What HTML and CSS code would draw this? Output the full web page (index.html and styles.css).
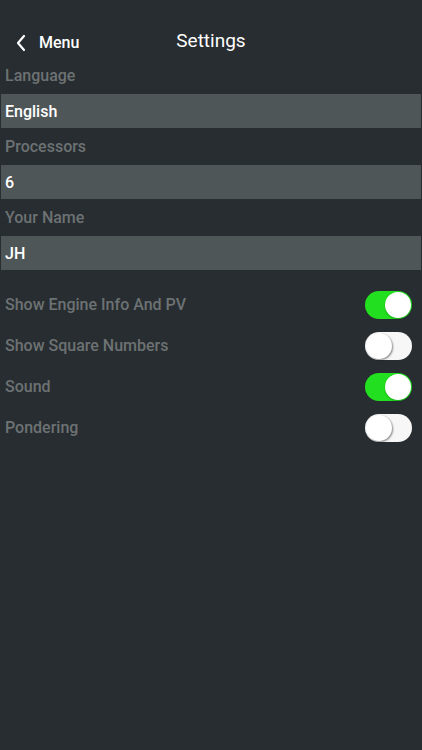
FILE: index.html
```html
<!DOCTYPE html>
<html>
<head>
<meta charset="utf-8">
<link rel="stylesheet" href="styles.css">
</head>
<body>
<div class="screen">
  <header class="nav">
    <div class="back">
      <svg class="chev" width="12" height="18" viewBox="0 0 12 18"><path d="M9 2 L3 9 L9 16" fill="none" stroke="#ffffff" stroke-width="2.2" stroke-linecap="round" stroke-linejoin="round"/></svg>
      <span>Menu</span>
    </div>
    <div class="title">Settings</div>
  </header>
  <section class="fields">
    <div class="label">Language</div>
    <div class="field">English</div>
    <div class="label">Processors</div>
    <div class="field">6</div>
    <div class="label">Your Name</div>
    <div class="field">JH</div>
  </section>
  <section class="toggles">
    <div class="row"><span>Show Engine Info And PV</span><div class="switch on"><div class="knob"></div></div></div>
    <div class="row"><span>Show Square Numbers</span><div class="switch"><div class="knob"></div></div></div>
    <div class="row"><span>Sound</span><div class="switch on"><div class="knob"></div></div></div>
    <div class="row"><span>Pondering</span><div class="switch"><div class="knob"></div></div></div>
  </section>
</div>
</body>
</html>
```
FILE: styles.css
```css
html, body {
  margin: 0;
  padding: 0;
  background: #272d30;
}
body {
  font-family: Roboto, "Liberation Sans", sans-serif;
  width: 422px;
  height: 750px;
  overflow: hidden;
}
.screen {
  display: flex;
  flex-direction: column;
}
.nav {
  height: 57px;
  position: relative;
  display: flex;
  justify-content: center;
  color: #ffffff;
}
.back {
  position: absolute;
  left: 15px;
  top: 33px;
  display: flex;
  align-items: center;
  gap: 12px;
  font-size: 16px;
  font-weight: 500;
}
.title {
  margin-top: 29px;
  line-height: 24px;
  height: 24px;
  font-size: 19px;
}
.fields {
  display: flex;
  flex-direction: column;
}
.label {
  height: 37px;
  display: flex;
  align-items: center;
  padding-left: 5px;
  font-size: 16px;
  font-weight: 500;
  color: #6d7274;
}
.field {
  height: 34px;
  margin: 0 1px;
  background: #4f5658;
  display: flex;
  align-items: center;
  padding-left: 4px;
  font-size: 16px;
  font-weight: 500;
  color: #ffffff;
}
.toggles {
  margin-top: 14px;
  display: flex;
  flex-direction: column;
}
.row {
  height: 41px;
  display: flex;
  align-items: center;
  justify-content: space-between;
  padding: 0 10px 0 5px;
  font-size: 16px;
  font-weight: 500;
  color: #6d7274;
}
.switch {
  width: 47px;
  height: 28px;
  border-radius: 14px;
  background: #f7f7f7;
  position: relative;
  box-sizing: border-box;
}
.switch.on {
  background: #22e01f;
}
.knob {
  position: absolute;
  top: 1px;
  left: 1px;
  width: 26px;
  height: 26px;
  border-radius: 50%;
  background: #ffffff;
  box-shadow: 1px 1px 2px rgba(0,0,0,0.45);
}
.switch.on .knob {
  left: 20px;
  box-shadow: 0 1px 2px rgba(0,0,0,0.25);
}
```
